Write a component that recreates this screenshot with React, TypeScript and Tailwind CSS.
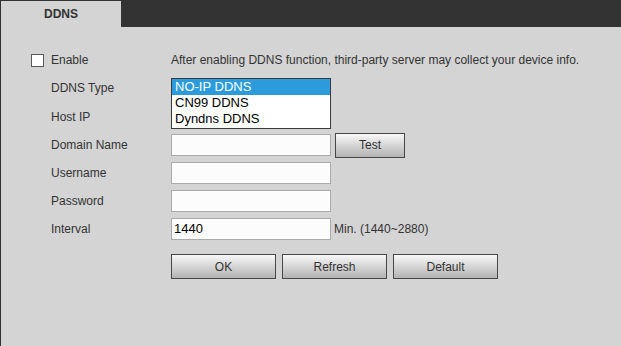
const font = "font-['Liberation_Sans',Arial,sans-serif]";

function Row({ label, check, height = "h-[28px]", children }: { label: string; check?: boolean; height?: string; children?: React.ReactNode }) {
    return (
        <div className={`flex items-center ${height}`}>
            <div className="w-[20px] flex items-center">
                {check && <div className="w-[13px] h-[13px] border border-[#5a5a5a] bg-white" />}
            </div>
            <div className="w-[120px] text-[12px] text-[#333]">{label}</div>
            <div className="relative flex items-center flex-1 h-full">{children}</div>
        </div>
    );
}

function TextBox({ value }: { value?: string }) {
    return (
        <div className="w-[160px] h-[22px] border border-[#ababab] bg-[#fcfcfc] pl-[2px] flex items-center text-[13px] text-black">
            {value}
        </div>
    );
}

function Btn({ text, w = "w-[105px]" }: { text: string; w?: string }) {
    return (
        <div className={`${w} h-[25px] border border-[#474747] bg-linear-to-b from-[#f8f8f8] to-[#b3b3b3] flex items-center justify-center text-[12px] text-[#333]`}>
            {text}
        </div>
    );
}

export default function App() {
    return (
        <div className={`w-[621px] h-[346px] bg-[#d4d4d4] border-l border-[#333] flex flex-col ${font}`}>
            {/* Tab bar */}
            <div className="h-[27px] bg-[#333] flex items-end shrink-0">
                <div className="w-[120px] h-[26px] bg-[#d4d4d4] flex items-center justify-center text-[12px] font-bold text-[#333]">
                    DDNS
                </div>
            </div>

            {/* Form */}
            <div className="pl-[30px] pt-[19px] flex flex-col">
                <Row label="Enable" check>
                    <span className="text-[12px] text-[#333] whitespace-nowrap">
                        After enabling DDNS function, third-party server may collect your device info.
                    </span>
                </Row>
                <Row label="DDNS Type">
                    <div className="absolute left-0 top-[4px] w-[160px] h-[51px] border border-[#3a3a3a] bg-white text-[13px] text-black z-10">
                        <div className="h-[16px] leading-[16px] pl-[3px] bg-[#2b9bdb] text-white">NO-IP DDNS</div>
                        <div className="h-[16px] leading-[16px] pl-[3px]">CN99 DDNS</div>
                        <div className="h-[16px] leading-[16px] pl-[3px]">Dyndns DDNS</div>
                    </div>
                </Row>
                <Row label="Host IP" height="h-[29px]" />
                <Row label="Domain Name">
                    <TextBox />
                    <div className="ml-[4px]">
                        <Btn text="Test" w="w-[70px]" />
                    </div>
                </Row>
                <Row label="Username">
                    <TextBox />
                </Row>
                <Row label="Password">
                    <TextBox />
                </Row>
                <Row label="Interval">
                    <TextBox value="1440" />
                    <span className="ml-[3px] text-[12px] text-[#333]">Min. (1440~2880)</span>
                </Row>

                <div className="flex gap-[6px] mt-[11px] ml-[140px]">
                    <Btn text="OK" />
                    <Btn text="Refresh" />
                    <Btn text="Default" />
                </div>
            </div>
        </div>
    );
}
